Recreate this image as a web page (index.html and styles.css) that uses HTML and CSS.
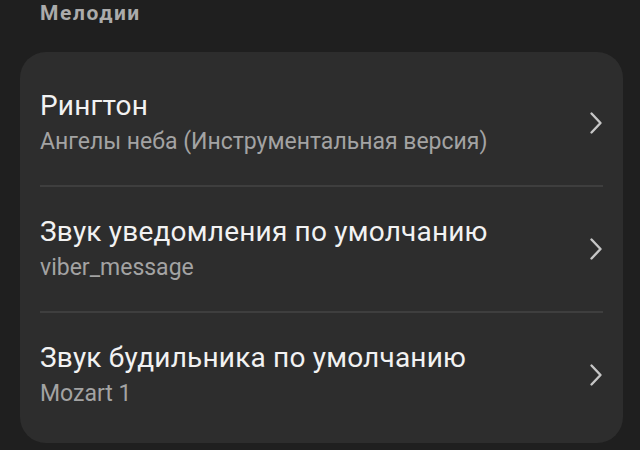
FILE: index.html
```html
<!DOCTYPE html>
<html lang="ru">
<head>
<meta charset="utf-8">
<link rel="stylesheet" href="styles.css">
</head>
<body>
<div class="screen">
  <div class="section-title">Мелодии</div>
  <div class="card">
    <div class="row">
      <div class="texts">
        <div class="title">Рингтон</div>
        <div class="sub">Ангелы неба (Инструментальная версия)</div>
      </div>
      <svg class="chev" width="14" height="24" viewBox="0 0 14 24"><path d="M2.5 2.5 L11.5 12 L2.5 21.5" fill="none" stroke="#c6c6c6" stroke-width="2.4" stroke-linecap="round" stroke-linejoin="round"/></svg>
    </div>
    <div class="divider"></div>
    <div class="row">
      <div class="texts">
        <div class="title">Звук уведомления по умолчанию</div>
        <div class="sub">viber_message</div>
      </div>
      <svg class="chev" width="14" height="24" viewBox="0 0 14 24"><path d="M2.5 2.5 L11.5 12 L2.5 21.5" fill="none" stroke="#c6c6c6" stroke-width="2.4" stroke-linecap="round" stroke-linejoin="round"/></svg>
    </div>
    <div class="divider"></div>
    <div class="row">
      <div class="texts">
        <div class="title">Звук будильника по умолчанию</div>
        <div class="sub">Mozart 1</div>
      </div>
      <svg class="chev" width="14" height="24" viewBox="0 0 14 24"><path d="M2.5 2.5 L11.5 12 L2.5 21.5" fill="none" stroke="#c6c6c6" stroke-width="2.4" stroke-linecap="round" stroke-linejoin="round"/></svg>
    </div>
  </div>
</div>
</body>
</html>
```

FILE: styles.css
```css
* { box-sizing: border-box; }
html, body { margin: 0; padding: 0; background: #1f1f1f; }
body { width: 640px; height: 450px; overflow: hidden; font-family: Roboto, "Noto Sans", sans-serif; }
.screen { padding: 0 17px 0 20px; }
.section-title {
  height: 52px;
  padding: 0 0 0 20px;
  font-weight: 700;
  font-size: 21px;
  letter-spacing: 1.6px;
  color: #ababab;
  line-height: 26px;
}
.card {
  background: #2d2d2d;
  border-radius: 26px;
  padding: 9px 20px 6px 20px;
}
.row {
  height: 124px;
  display: flex;
  align-items: center;
  justify-content: space-between;
}
.texts { display: flex; flex-direction: column; gap: 6px; }
.title { font-size: 28px; color: #f2f2f2; line-height: 32px; letter-spacing: 0.2px; }
.sub { font-size: 23px; color: #a3a3a3; line-height: 28px; }
.chev { display: block; }
.divider { height: 2px; background: #3e3e3e; }
```
